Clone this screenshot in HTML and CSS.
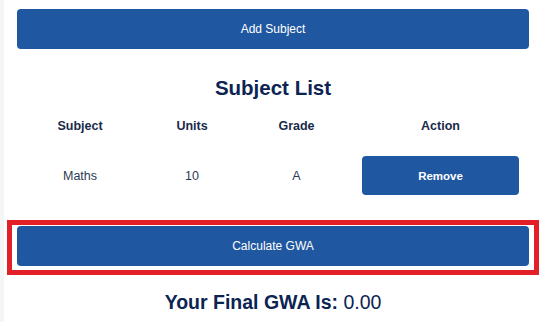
FILE: index.html
```html
<!DOCTYPE html>
<html lang="en">
<head>
<meta charset="utf-8">
<title>GWA Calculator</title>
<link rel="stylesheet" href="styles.css">
</head>
<body>
<div class="page">
  <button class="btn btn-wide">Add Subject</button>
  <h2 class="title">Subject List</h2>
  <div class="table">
    <div class="cell head">Subject</div>
    <div class="cell head">Units</div>
    <div class="cell head">Grade</div>
    <div class="cell head">Action</div>
    <div class="cell data">Maths</div>
    <div class="cell data">10</div>
    <div class="cell data">A</div>
    <div class="cell data action"><button class="btn btn-remove">Remove</button></div>
  </div>
  <div class="highlight">
    <button class="btn btn-wide">Calculate GWA</button>
  </div>
  <p class="result"><strong>Your Final GWA Is:</strong> <span class="value">0.00</span></p>
</div>
</body>
</html>
```
FILE: styles.css
```css
html, body {
  margin: 0;
  padding: 0;
}
body {
  background: #f5f5f5;
  font-family: "Liberation Sans", Arial, sans-serif;
  width: 545px;
  height: 322px;
  overflow: hidden;
}
.page {
  margin-left: 4px;
  background: #ffffff;
  min-height: 322px;
  padding: 9px 16px 0 13px;
  box-sizing: border-box;
  display: flex;
  flex-direction: column;
}
.btn {
  background: #1f57a1;
  color: #ffffff;
  border: none;
  border-radius: 4px;
  font-family: "Liberation Sans", Arial, sans-serif;
  cursor: pointer;
  padding: 0;
}
.btn-wide {
  width: 100%;
  height: 40px;
  font-size: 12px;
}
.title {
  margin: 27px 0 0;
  font-size: 20.5px;
  line-height: 24px;
  font-weight: bold;
  color: #0b2452;
  text-align: center;
}
.table {
  display: grid;
  grid-template-columns: 126px 98px 111px 177px;
}
.cell {
  text-align: center;
  padding: 0 10px;
  display: flex;
  align-items: center;
  justify-content: center;
}
.head {
  font-size: 12.5px;
  font-weight: bold;
  line-height: 16px;
  color: #1a2a4a;
  padding-top: 18px;
  padding-bottom: 18px;
}
.data {
  font-size: 12.5px;
  line-height: 16px;
  color: #2a3a55;
  padding-top: 4px;
  padding-bottom: 4px;
}
.btn-remove {
  width: 100%;
  height: 39px;
  font-size: 11.5px;
  font-weight: bold;
}
.highlight {
  margin: 21px 0 0 -10px;
  margin-right: -10px;
  border: 5px solid #e32028;
  padding: 1px 5px 4px;
  display: flex;
}
.result {
  margin: 15px 0 0;
  font-size: 19.5px;
  line-height: 24px;
  color: #0b2452;
  text-align: center;
}
.result strong {
  font-weight: bold;
}
.value {
  font-weight: normal;
}
```
